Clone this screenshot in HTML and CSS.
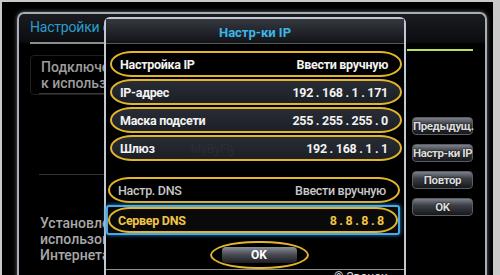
FILE: index.html
```html
<!DOCTYPE html>
<html lang="ru">
<head>
    <meta charset="UTF-8">
    <title>Настр-ки IP</title>
    <link rel="stylesheet" href="styles.css">
</head>
<body>

    <div class="screen">

        <!-- Network settings window behind the dialog -->
        <div class="window">
            <div class="window-title">Настройки с</div>
            <div class="window-rule"></div>
            <div class="window-progress"></div>

            <div class="window-body">
                <div class="window-main">
                    <div class="info-box">
                        <div class="info-text">Подключен<br>к использов</div>
                    </div>
                    <div class="main-rule"></div>
                    <div class="status-text">Установлен<br>использова<br>Интернета.</div>
                </div>

                <div class="side-buttons">
                    <div class="tv-btn">Предыдущ.</div>
                    <div class="tv-btn">Настр-ки IP</div>
                    <div class="tv-btn">Повтор</div>
                    <div class="tv-btn">OK</div>
                </div>
            </div>
        </div>

        <!-- IP settings dialog -->
        <div class="dialog">
            <div class="dialog-head">Настр-ки IP</div>

            <div class="dialog-rows">
                <div class="row">
                    <span>Настройка IP</span>
                    <span>Ввести вручную</span>
                </div>
                <div class="row row-field">
                    <span>IP-адрес</span>
                    <span>192 . 168 . 1 . 171</span>
                </div>
                <div class="row row-field">
                    <span>Маска подсети</span>
                    <span>255 . 255 . 255 . 0</span>
                </div>
                <div class="row row-field">
                    <span>Шлюз</span>
                    <span class="ghost">MyByFly</span>
                    <span>192 . 168 . 1 . 1</span>
                </div>

                <div class="row row-dns">
                    <span>Настр. DNS</span>
                    <span>Ввести вручную</span>
                </div>
                <div class="focus-box">
                    <div class="row row-active">
                        <span>Сервер DNS</span>
                        <span>8 . 8 . 8 . 8</span>
                    </div>
                </div>

                <div class="ok-ring">
                    <div class="ok-btn">OK</div>
                </div>
            </div>

            <div class="dialog-foot">© Звонок</div>
        </div>

    </div>

</body>
</html>
```

FILE: styles.css
```css
body {
    margin: 0;
    background-color: #c9c9c9;
    font-family: Roboto, "DejaVu Sans", sans-serif;
}

.screen {
    position: relative;
    margin: 2px 7px 0 2px;
    height: 273px;
    background-color: #000;
    overflow: hidden;
}

/* Background window */
.window {
    margin: 10px 0 0 15px;
    width: 466px;
    height: 280px;
    border: 2px solid #a9adb5;
    border-bottom: none;
    border-radius: 7px 7px 0 0;
    box-shadow: 0 0 4px rgba(200, 205, 220, 0.5);
    background: linear-gradient(#1a1c21 0, #0b0c0f 28px, #000 30px);
}

.window-title {
    padding-left: 11px;
    height: 26px;
    line-height: 27px;
    font-size: 14px;
    letter-spacing: -0.2px;
    color: #2a9dcc;
    white-space: nowrap;
}

.window-rule {
    margin: 2px 0 0 11px;
    width: 120px;
    height: 2px;
    background-color: #8a8c90;
}

.window-progress {
    margin: 5px 0 0 388px;
    width: 66px;
    height: 2px;
    background-color: #bde05a;
}

.window-body {
    display: flex;
    gap: 8px;
    margin-top: 4px;
    padding: 0 12px 0 11px;
}

.window-main {
    flex: 1;
}

.info-box {
    border: 1px solid #1f1f1f;
    border-radius: 4px;
    padding: 0 0 0 8px;
}

.info-text {
    padding: 3px 0 2px 2px;
    border-bottom: 1px solid #3a3a3a;
    font-size: 14px;
    font-weight: 500;
    line-height: 16px;
    color: #9c9c9c;
    white-space: nowrap;
}

.main-rule {
    margin: 79px 0 0 9px;
    width: 70px;
    height: 1px;
    background-color: #333;
}

.status-text {
    margin: 40px 0 0 10px;
    font-size: 14px;
    font-weight: 500;
    line-height: 16px;
    color: #a8a8a8;
    white-space: nowrap;
}

.side-buttons {
    display: flex;
    flex-direction: column;
    gap: 9px;
    padding: 62px 0 0 2px;
    width: 61px;
}

.tv-btn {
    height: 16px;
    line-height: 16px;
    border: 1px solid #5a5d63;
    border-radius: 4px;
    background: linear-gradient(#7c8088 0, #3c3f46 40%, #16181c 100%);
    text-align: center;
    font-size: 11.5px;
    font-weight: bold;
    letter-spacing: -0.4px;
    color: #dcdcdc;
    text-shadow: 0 0 2px #000;
    white-space: nowrap;
}

/* IP settings dialog, drawn over the window */
.dialog {
    position: absolute;
    left: 102px;
    top: 15px;
    bottom: 0;
    width: 298px;
    border: 2px solid #c3c7cf;
    border-bottom: none;
    border-radius: 6px 6px 0 0;
    background-color: #000;
    display: flex;
    flex-direction: column;
}

.dialog-head {
    height: 21px;
    padding-top: 3px;
    line-height: 22px;
    border-bottom: 1px solid #55585e;
    background: linear-gradient(#34383f, #131417);
    text-align: center;
    font-size: 13px;
    font-weight: bold;
    color: #3ab6ea;
}

.dialog-rows {
    flex: 1;
    display: flex;
    flex-direction: column;
    gap: 2px;
    padding: 7px 2px 0 4px;
}

.row {
    display: flex;
    justify-content: space-between;
    align-items: center;
    height: 22px;
    padding: 0 12px 0 8px;
    border: 2px solid #e2b52a;
    border-radius: 22px / 13px;
    font-size: 12.5px;
    font-weight: bold;
    letter-spacing: -0.3px;
    color: #f2f2f2;
    white-space: nowrap;
}

.row-field {
    background: linear-gradient(#282c35, #1c1f25);
}

.ghost {
    margin-right: auto;
    margin-left: 36px;
    font-weight: normal;
    color: #2a2e36;
}

.row-dns {
    margin: 14px 2px 0 -2px;
    font-weight: 500;
    color: #c8c8c8;
}

.focus-box {
    margin: 0 2px 0 -4px;
    border: 2px solid #4aa8e8;
    border-radius: 3px;
    box-shadow: 0 0 4px #2a86d0;
    background-color: #0a0a0b;
}

.row-active {
    color: #f2c443;
}

.ok-ring {
    align-self: center;
    margin: 4px 0 0 6px;
    padding: 4px 10px;
    border: 2px solid #e2b52a;
    border-radius: 50px / 15px;
}

.ok-btn {
    width: 75px;
    height: 16px;
    line-height: 16px;
    border-radius: 4px;
    background: linear-gradient(#8a8e96 0, #4a4d54 45%, #1c1e22 100%);
    text-align: center;
    font-size: 12px;
    font-weight: bold;
    color: #fff;
}

.dialog-foot {
    height: 9px;
    padding-left: 228px;
    border-top: 1px solid #8c8e92;
    font-size: 12px;
    line-height: 14px;
    color: #e0e0e0;
    white-space: nowrap;
    overflow: hidden;
}
```
